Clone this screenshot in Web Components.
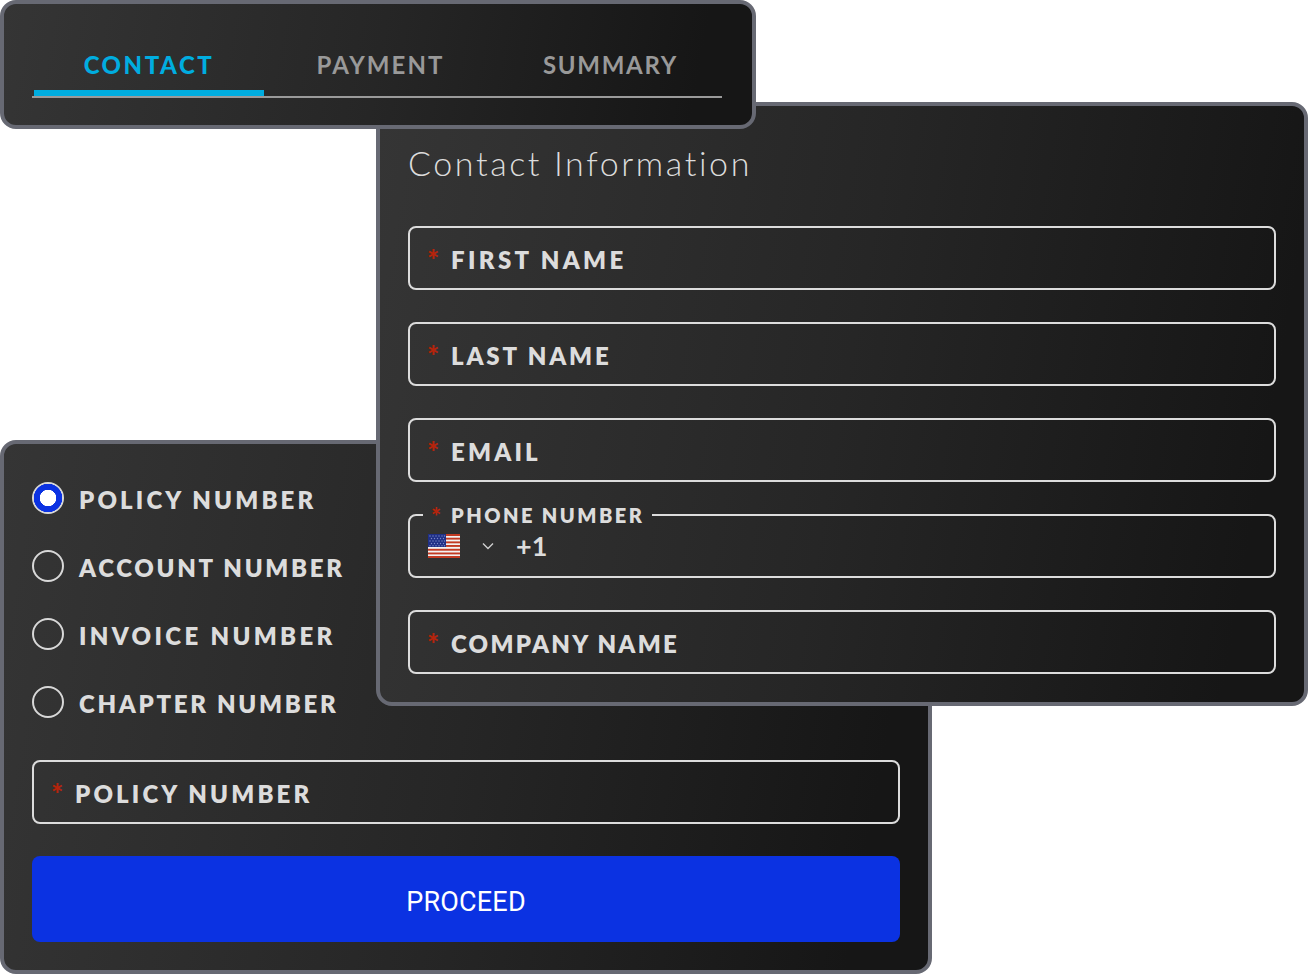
<!DOCTYPE html>
<html lang="en"><head><meta charset="utf-8"><title>Checkout form</title>
<style>
html,body{margin:0;padding:0;background:#fff}
body{font-family:"Lato","Liberation Sans",sans-serif}
.canvas{position:relative;width:1308px;height:974px;overflow:hidden}
.canvas>*{position:absolute}
#policy{left:0;top:440px;width:932px;height:534px;z-index:1}
#contact{left:376px;top:102px;width:932px;height:604px;z-index:2}
#tabs{left:0;top:0;width:756px;height:129px;z-index:3}
</style></head><body>
<template id="t-card"><style>
:host{display:block;box-sizing:border-box;border:4px solid #676973;border-radius:16px;background:linear-gradient(100deg,#353535 0%,#262626 50%,#161616 92%)}
.in{box-sizing:border-box;height:100%;display:flex;flex-direction:column;padding:var(--pad,0 28px 28px)}
</style><div class="in"><slot></slot></div></template>

<template id="t-tabs"><style>
:host{display:flex;margin-top:var(--mt,0);border-bottom:2px solid #9a9a9a;height:58px;box-sizing:content-box;padding-left:2px;width:688px}
</style><slot></slot></template>

<template id="t-tab"><style>
:host{display:flex;flex:none;box-sizing:border-box;width:230px;height:58px;align-items:center;justify-content:center;padding:2px 0 0 3px;font:700 24px/30px "Lato",sans-serif;letter-spacing:2.1px;color:#999;border-bottom:6px solid transparent}
:host([active]){color:#00ade0;border-bottom-color:#00ade0;font-weight:900;letter-spacing:2.55px;padding-left:0;width:230px}
</style><slot></slot></template>

<template id="t-field"><style>
:host{display:flex;flex:none;box-sizing:border-box;height:64px;align-items:center;gap:12px;padding:4px 17px 0;border:2px solid #dcdcdc;border-radius:8px;color:#dcdcdc;font:800 24px/30px "Lato",sans-serif;letter-spacing:var(--ls,2.6px)}
.star{color:#b5240c;font-size:29px;line-height:24px;height:24px;margin-top:-2px;letter-spacing:0;width:12px;font-weight:900}
</style><span class="star">*</span><span><slot></slot></span></template>

<template id="t-phone"><style>
:host{display:block;flex:none;height:64px;color:#dcdcdc}
fieldset{box-sizing:border-box;margin:-11px 0 0;height:75px;padding:0 18px;border:2px solid #dcdcdc;border-radius:8px;display:block;min-width:0}
legend{padding:0 8px;margin-left:-5px;font:800 20px/24px "Lato",sans-serif;letter-spacing:2.45px;height:24px;margin-bottom:4px}
.star{display:inline-block;width:20px;color:#b5240c;letter-spacing:0;font-size:24px;line-height:20px;font-weight:900;vertical-align:top;margin-top:4px}
.row{display:flex;align-items:center;height:30px}
svg{display:block;flex:none}
.code{font:700 27px/30px "Lato",sans-serif;margin-left:22px;color:#dcdcdc}
</style><fieldset><legend><span class="star">*</span><slot name="label"></slot></legend>
<div class="row">
<svg width="32" height="24" viewBox="0 0 32 24" aria-label="United States flag"><rect width="32" height="24" fill="#f2f2f2"/><g fill="#c23a22"><rect y="0" width="32" height="2"/><rect y="3.7" width="32" height="1.9"/><rect y="7.4" width="32" height="1.9"/><rect y="11" width="32" height="1.9"/><rect y="14.8" width="32" height="1.9"/><rect y="18.5" width="32" height="1.9"/><rect y="22" width="32" height="2"/></g><rect width="18" height="13" fill="#1f2f86"/><g fill="#7b88c6"><circle cx="2" cy="2" r=".7"/><circle cx="5" cy="2" r=".7"/><circle cx="8" cy="2" r=".7"/><circle cx="11" cy="2" r=".7"/><circle cx="14" cy="2" r=".7"/><circle cx="16.5" cy="2" r=".7"/><circle cx="3.5" cy="4.5" r=".7"/><circle cx="6.5" cy="4.5" r=".7"/><circle cx="9.5" cy="4.5" r=".7"/><circle cx="12.5" cy="4.5" r=".7"/><circle cx="15.5" cy="4.5" r=".7"/><circle cx="2" cy="7" r=".7"/><circle cx="5" cy="7" r=".7"/><circle cx="8" cy="7" r=".7"/><circle cx="11" cy="7" r=".7"/><circle cx="14" cy="7" r=".7"/><circle cx="16.5" cy="7" r=".7"/><circle cx="3.5" cy="9.5" r=".7"/><circle cx="6.5" cy="9.5" r=".7"/><circle cx="9.5" cy="9.5" r=".7"/><circle cx="12.5" cy="9.5" r=".7"/><circle cx="15.5" cy="9.5" r=".7"/><circle cx="2" cy="11.7" r=".7"/><circle cx="5" cy="11.7" r=".7"/><circle cx="8" cy="11.7" r=".7"/><circle cx="11" cy="11.7" r=".7"/><circle cx="14" cy="11.7" r=".7"/><circle cx="16.5" cy="11.7" r=".7"/></g></svg>
<svg style="margin-left:22px" width="12" height="8" viewBox="0 0 12 8" fill="none" stroke="#cfcfcf" stroke-width="1.4" aria-hidden="true"><path d="M1 1.5 6 6.5 11 1.5"/></svg>
<span class="code"><slot name="code"></slot></span>
</div></fieldset></template>

<template id="t-radio"><style>
:host{display:flex;align-items:center;flex:none;height:32px;gap:15px;color:#dcdcdc;font:800 24px/32px "Lato",sans-serif;letter-spacing:var(--ls,2.9px)}
.dot{box-sizing:border-box;flex:none;width:32px;height:32px;border-radius:50%;border:2px solid #d8d8d8}
:host([checked]) .dot{border:none;background:radial-gradient(circle,#fff 0 8px,#0b32e2 8.5px 14px,#d8d8d8 14.5px)}
.t{position:relative;top:2px}
</style><span class="dot"></span><span class="t"><slot></slot></span></template>

<template id="t-btn"><style>
:host{display:flex;flex:none;height:86px;align-items:center;justify-content:center;background:#0b32e2;border-radius:8px;color:#fff;font:400 27px/30px "Roboto",sans-serif;padding-top:6px;box-sizing:border-box;letter-spacing:.2px}
</style><slot></slot></template>

<template id="t-title"><style>
:host{display:block;flex:none;font:300 34px/40px "Lato",sans-serif;letter-spacing:2.6px;color:#dcdcdc;margin:37px 0 43px}
</style><slot></slot></template>

<div class="canvas">
<x-card id="policy" style="--pad:38px 28px 28px">
  <x-radio checked style="--ls:3.15px">POLICY NUMBER</x-radio>
  <x-radio style="margin-top:36px;--ls:2.7px">ACCOUNT NUMBER</x-radio>
  <x-radio style="margin-top:36px;--ls:3.35px">INVOICE NUMBER</x-radio>
  <x-radio style="margin-top:36px;--ls:2.7px">CHAPTER NUMBER</x-radio>
  <x-field style="margin-top:42px;--ls:3.15px">POLICY NUMBER</x-field>
  <x-btn style="margin-top:32px">PROCEED</x-btn>
</x-card>
<x-card id="contact" style="--pad:0 28px 28px">
  <x-title>Contact Information</x-title>
  <x-field style="--ls:3.35px">FIRST NAME</x-field>
  <x-field style="margin-top:32px;--ls:2.85px">LAST NAME</x-field>
  <x-field style="margin-top:32px;--ls:3.2px">EMAIL</x-field>
  <x-phone style="margin-top:32px"><span slot="label">PHONE NUMBER</span><span slot="code">+1</span></x-phone>
  <x-field style="margin-top:32px;--ls:2.27px">COMPANY NAME</x-field>
</x-card>
<x-card id="tabs" style="--pad:34px 30px 0 28px">
  <x-tabs>
    <x-tab active>CONTACT</x-tab><x-tab>PAYMENT</x-tab><x-tab style="letter-spacing:1.7px">SUMMARY</x-tab>
  </x-tabs>
</x-card>
</div>
<script>
for(const n of ['card','tabs','tab','field','phone','radio','btn','title']){
  customElements.define('x-'+n,class extends HTMLElement{
    constructor(){super();this.attachShadow({mode:'open'}).appendChild(document.getElementById('t-'+n).content.cloneNode(true));}
  });
}
</script>
</body></html>
